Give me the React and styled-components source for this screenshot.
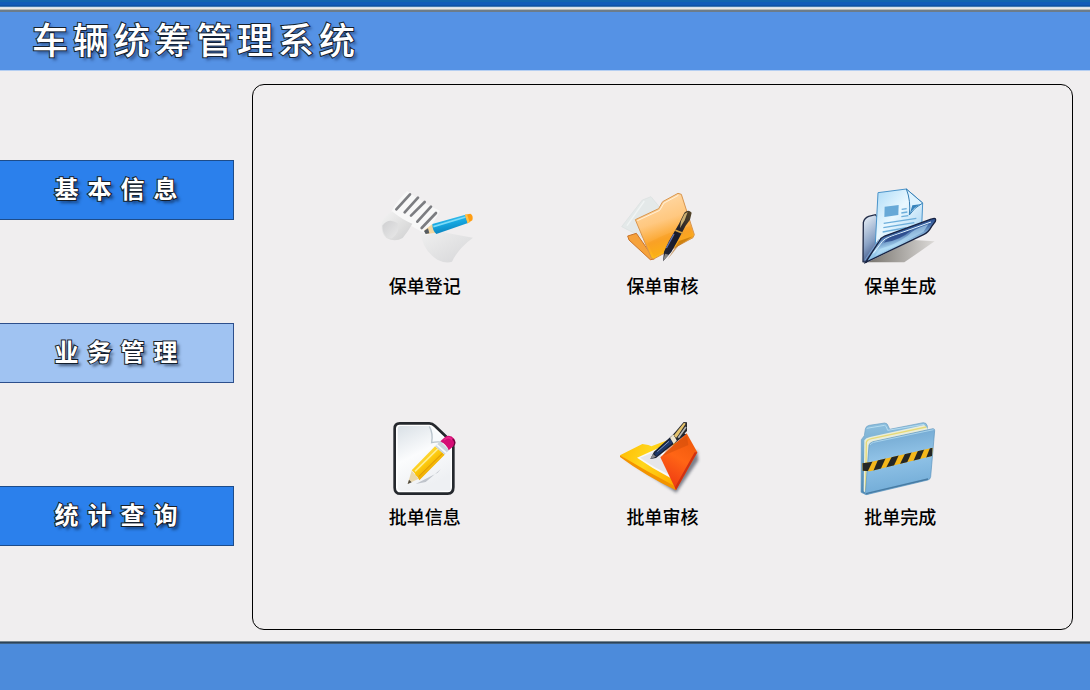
import React, { useState } from 'react';
import styled, { createGlobalStyle } from 'styled-components';


const GlobalStyle = createGlobalStyle`
  * {
    box-sizing: border-box;
  }

  body {
    margin: 0;
    background: #f0eeef;
    font-family: "Liberation Sans", "Noto Sans CJK SC", sans-serif;
  }

  button {
    font-family: inherit;
    cursor: pointer;
  }
`;

const Page = styled.div`
  display: flex;
  flex-direction: column;
  min-height: 100vh;
`;

const TopStrip = styled.div`
  height: 12px;
  background: linear-gradient(
    #1065ae 0 2px,
    #0f5cb8 2px 5px,
    #0c52a8 5px 6px,
    #3f78ae 6px 7px,
    #d5e2ee 7px 8px,
    #e9e9e4 8px 9px,
    #b5bab4 9px 10px,
    #6c7c8b 10px 12px
  );
`;

const Header = styled.header`
  display: flex;
  align-items: center;
  height: 59px;
  padding: 2px 32px 0;
  background: #5592e5;
  border-bottom: 1px solid #b4cef2;
`;

const Title = styled.h1`
  margin: 0;
  font-size: 36px;
  line-height: 40px;
  font-weight: 500;
  letter-spacing: 5px;
  color: #fff;
  -webkit-text-stroke: 2px #16202c;
  paint-order: stroke fill;
  text-shadow: 3px 3px 3px rgba(20, 40, 80, 0.5);
`;

const Body = styled.div`
  flex: 1;
  display: flex;
  gap: 18px;
  padding-right: 17px;
`;

const Sidebar = styled.nav`
  display: flex;
  flex-direction: column;
  justify-content: center;
  gap: 103px;
  width: 234px;
  padding-bottom: 6px;
`;

const NavButton = styled.button`
  height: 60px;
  padding: 0 0 0 8px;
  border: 1px solid ${(props) => (props.$active ? '#2d4f8c' : '#1d4c8a')};
  border-left: 0;
  background: ${(props) => (props.$active ? '#a0c3f2' : '#2b80ec')};
  font-size: 24px;
  line-height: 32px;
  font-weight: 700;
  letter-spacing: 9px;
  color: #fff;
  -webkit-text-stroke: 2px #1b2228;
  paint-order: stroke fill;
  text-shadow: 3px 3px 3px rgba(10, 25, 50, 0.6);
`;

const Panel = styled.main`
  flex: 1;
  display: grid;
  grid-template-columns: repeat(3, 1fr);
  grid-template-rows: repeat(2, 1fr);
  place-items: center;
  margin: 13px 0 11px;
  padding: 42px 53px 40px;
  border: 1px solid #000;
  border-radius: 12px;
`;

const Tile = styled.button`
  display: flex;
  flex-direction: column;
  align-items: center;
  gap: 8px;
  padding: 0;
  border: 0;
  background: none;
  font-size: 18px;
  line-height: 24px;
  font-weight: 500;
  color: #000;
`;

const Picture = styled.svg`
  display: block;
  width: 100px;
  height: 80px;
`;

const Footer = styled.footer`
  height: 49px;
  background: linear-gradient(
    #76868f 0 1px,
    #2c4258 1px 2px,
    #3f6080 2px 3px,
    #4c8bdb 3px
  );
`;


function RegisterIcon() {
  return (
    <Picture viewBox="27 21 300 240" aria-hidden="true">
      <defs>
        <linearGradient id="regPaper" x1="0" y1="0" x2="1" y2="1">
          <stop offset="0" stopColor="#f0f0f0" />
          <stop offset="1" stopColor="#d6d6d8" />
        </linearGradient>
        <linearGradient id="regRoll" x1="0" y1="0" x2="1" y2="1">
          <stop offset="0" stopColor="#f4f4f4" />
          <stop offset="0.6" stopColor="#dedede" />
          <stop offset="1" stopColor="#cdcdcf" />
        </linearGradient>
        <linearGradient id="regCurl" x1="0" y1="0" x2="1" y2="1">
          <stop offset="0" stopColor="#cfcfd1" />
          <stop offset="1" stopColor="#e9e9e9" />
        </linearGradient>
        <linearGradient id="regPencil" x1="0" y1="0" x2="0.3" y2="1">
          <stop offset="0" stopColor="#5fd0f4" />
          <stop offset="0.5" stopColor="#17a9e2" />
          <stop offset="1" stopColor="#0a82bd" />
        </linearGradient>
      </defs>
      <path d="M124 33 Q94 60 74 98 L140 140 L186 166 Q202 125 222 92 Q176 74 124 33Z" fill="#f8f8f8" />
      <path d="M163 152 Q168 210 214 239 Q240 252 258 245 Q277 205 321 173 Q262 163 213 152 Q183 178 163 152Z" fill="url(#regPaper)" />
      <path d="M78 94 Q54 106 46 133 Q45 160 61 174 Q87 188 110 174 Q126 155 139 131 Q113 122 78 94Z" fill="url(#regRoll)" />
      <path d="M49 137 Q68 111 95 130 Q105 155 78 175 Q50 174 49 137Z" fill="url(#regCurl)" />
      <g stroke="#7c7d81" strokeWidth="8" strokeLinecap="round">
        <path d="M132 43 L91 88" />
        <path d="M156 53 L116 97" />
        <path d="M176 66 L135 107" />
        <path d="M195 80 L154 125" />
        <path d="M210 99 L167 144" />
      </g>
      <path d="M175 151 L199 132 L211 158 L181 162Z" fill="#f3d6a0" />
      <path d="M174 153 L186 145 L190 160 L179 162Z" fill="#555b60" />
      <path d="M199 132 L298 104 L306 129 L211 162 Q199 152 199 132Z" fill="url(#regPencil)" />
      <path d="M202 140 L299 111" stroke="#7cdcf8" strokeWidth="5" />
      <path d="M297 104 L313 101 Q323 106 319 121 L305 130Z" fill="#ff9d13" />
      <path d="M297 104 L303 103 L311 127 L305 130Z" fill="#ffc24c" />
    </Picture>
  );
}

function ReviewIcon() {
  return (
    <Picture viewBox="21 21 300 240" aria-hidden="true">
      <defs>
        <linearGradient id="revFront" x1="0.2" y1="0" x2="0.5" y2="1">
          <stop offset="0" stopColor="#ffdcae" />
          <stop offset="0.45" stopColor="#ffc880" />
          <stop offset="0.72" stopColor="#fba52b" />
          <stop offset="1" stopColor="#ffc20d" />
        </linearGradient>
        <linearGradient id="revPen" x1="0" y1="1" x2="1" y2="0">
          <stop offset="0" stopColor="#232634" />
          <stop offset="0.5" stopColor="#171a2b" />
          <stop offset="1" stopColor="#574628" />
        </linearGradient>
      </defs>
      <path d="M50 140 L112 60 L138 50 L164 82 L120 176Z" fill="#e4e9e9" stroke="#d9e0e0" strokeWidth="2" />
      <path d="M66 137 L118 63" stroke="#f0f4f4" strokeWidth="4" />
      <path d="M68 168 L94 160 L148 237 L136 239 L72 180Z" fill="#f6a23b" stroke="#c9742b" strokeWidth="3" />
      <path d="M91 119 L161 86 L173 65 L219 40 L229 43 L268 164 L264 173 L146 237 L139 234Z" fill="url(#revFront)" stroke="#d8954e" strokeWidth="3" strokeLinejoin="round" />
      <path d="M97 122 L164 91 L177 69 L220 46" stroke="#fff0d8" strokeWidth="3" fill="none" />
      <path d="M128 190 Q180 160 257 138 L263 168 L147 231Z" fill="#f69718" opacity="0.3" />
      <path d="M188 238 L222 183 L264 169 L220 198Z" fill="#a95e08" opacity="0.55" />
      <path d="M174 244 L177 215 L192 183 L222 131 L238 98 Q250 87 260 98 L255 119 L242 137 L216 186 L199 216Z" fill="url(#revPen)" />
      <path d="M228 123 L239 101 L248 96 L239 121 L225 144Z" fill="#ccb071" />
      <path d="M211 151 L234 160" stroke="#d2a043" strokeWidth="5" />
      <path d="M184 204 L207 162" stroke="#6576b4" strokeWidth="4" />
      <path d="M180 221 L191 224 L174 244Z" fill="#888" />
    </Picture>
  );
}

function CreateIcon() {
  return (
    <Picture viewBox="15 21 300 240" aria-hidden="true">
      <defs>
        <linearGradient id="creSheet" x1="0" y1="0" x2="1" y2="1">
          <stop offset="0" stopColor="#abdaf7" />
          <stop offset="0.45" stopColor="#e9f8ff" />
          <stop offset="1" stopColor="#9ccdf0" />
        </linearGradient>
        <linearGradient id="creBack" x1="0" y1="0" x2="1" y2="1">
          <stop offset="0" stopColor="#f0f6fb" />
          <stop offset="0.35" stopColor="#8ba3c6" />
          <stop offset="0.6" stopColor="#33497c" />
          <stop offset="1" stopColor="#1f2f62" />
        </linearGradient>
        <linearGradient id="creFront" x1="0.3" y1="0.1" x2="0.65" y2="0.9">
          <stop offset="0" stopColor="#1c377c" />
          <stop offset="0.3" stopColor="#38609f" />
          <stop offset="0.6" stopColor="#a5d2ef" />
          <stop offset="1" stopColor="#5e9fd4" />
        </linearGradient>
        <linearGradient id="creShadow" x1="0" y1="0" x2="1" y2="0">
          <stop offset="0" stopColor="#77736d" />
          <stop offset="1" stopColor="#dcdad8" />
        </linearGradient>
      </defs>
      <path d="M68 247 L204 180 L269 184 L178 247Z" fill="url(#creShadow)" />
      <path d="M54 245 L55 127 Q58 114 71 109 L91 104 L98 112 L192 121 L208 130 L63 247Z" fill="url(#creBack)" stroke="#222c48" strokeWidth="4" />
      <path d="M99 38 L184 27 L233 69 L230 142 L91 191Z" fill="url(#creSheet)" stroke="#4b94ca" strokeWidth="3" />
      <path d="M184 27 Q198 62 193 105 Q207 83 233 69Z" fill="#def3ff" stroke="#347eb4" strokeWidth="3" />
      <path d="M193 105 Q207 78 231 72 L202 76Z" fill="#3684bd" />
      <path d="M119 80 L161 75 L160 105 L118 111Z" fill="#67a9d7" />
      <g stroke="#6caedb" strokeWidth="4">
        <path d="M170 88 L185 86 M169 99 L187 96 M169 110 L190 107" />
        <path d="M116 130 L214 115 M115 143 L208 128 M113 156 L184 143" />
      </g>
      <path d="M62 247 L103 183 Q107 173 119 168 L260 117 Q275 111 271 124 L260 139 Q250 157 237 163 L62 247Z" fill="url(#creFront)" stroke="#172241" strokeWidth="4" />
      <path d="M85 220 L112 184 Q120 175 133 171 L258 126" stroke="#e0f2ff" strokeWidth="3" fill="none" />
      <path d="M124 186 Q166 180 200 150 L150 166 Q128 172 116 188Z" fill="#1f3c80" opacity="0.7" />
      <path d="M106 206 Q151 194 188 167 Q205 148 250 133 L235 156 L90 228Z" fill="#bce4fa" opacity="0.55" />
      <path d="M60 240 L102 178" stroke="#789fcd" strokeWidth="3" />
    </Picture>
  );
}

function EditIcon() {
  return (
    <Picture viewBox="29 24 300 240" aria-hidden="true">
      <defs>
        <linearGradient id="ediPage" x1="0" y1="0" x2="0.4" y2="1">
          <stop offset="0" stopColor="#d9e0e6" />
          <stop offset="0.5" stopColor="#fbfcfd" />
          <stop offset="1" stopColor="#eef0f3" />
        </linearGradient>
        <linearGradient id="ediPencil" x1="0.2" y1="0.2" x2="0.7" y2="0.8">
          <stop offset="0" stopColor="#ffe35a" />
          <stop offset="0.5" stopColor="#fcc80b" />
          <stop offset="1" stopColor="#e99d00" />
        </linearGradient>
      </defs>
      <path d="M103 40 L192 40 Q201 40 209 48 L257 94 Q264 101 264 111 L264 232 Q264 251 247 251 L106 251 Q88 251 88 233 L88 56 Q88 40 103 40Z" fill="#fff" stroke="#25282d" strokeWidth="8" />
      <path d="M105 48 L190 48 L248 102 L256 116 L256 242 L106 242 Q97 242 97 232 L97 57 Q97 48 105 48Z" fill="url(#ediPage)" />
      <path d="M191 45 Q204 70 199 98 Q225 93 257 103Z" fill="#f7fafc" />
      <path d="M192 49 Q204 70 199 98 Q221 92 250 101" fill="none" stroke="#b8c4cc" strokeWidth="4" />
      <path d="M151 222 L217 188 L226 178 L181 216Z" fill="#bfc4cb" />
      <path d="M127 222 L139 182 L160 206Z" fill="#e9d7ac" />
      <path d="M127 222 L131 209 L139 217Z" fill="#4f4a40" />
      <path d="M139 181 L209 109 L238 134 L162 211Q158 200 151 196Q147 187 139 181Z" fill="url(#ediPencil)" />
      <path d="M149 184 L217 117" stroke="#ffee91" strokeWidth="5" />
      <path d="M160 200 L232 129" stroke="#d99204" strokeWidth="3" />
      <path d="M209 109 L225 94 L251 120 L238 134Z" fill="#cbd6de" />
      <path d="M214 104 L243 129" stroke="#f5f9fb" strokeWidth="5" />
      <path d="M225 94 L242 79 Q256 73 267 87 Q274 99 265 108 L250 121 Q244 104 225 94Z" fill="#d50c75" />
      <path d="M236 90 Q250 76 261 90" stroke="#e8288a" strokeWidth="5" fill="none" />
      <path d="M262 87 Q273 96 265 108" stroke="#6e063e" strokeWidth="4" fill="none" />
    </Picture>
  );
}

function AuditIcon() {
  return (
    <Picture viewBox="19 24 300 240" aria-hidden="true">
      <defs>
        <linearGradient id="audYellow" x1="0" y1="0" x2="1" y2="0.4">
          <stop offset="0" stopColor="#ffb900" />
          <stop offset="0.5" stopColor="#ffd61c" />
          <stop offset="1" stopColor="#ffb000" />
        </linearGradient>
        <linearGradient id="audRed" x1="0.7" y1="0" x2="0.3" y2="1">
          <stop offset="0" stopColor="#ef590c" />
          <stop offset="0.45" stopColor="#ff6515" />
          <stop offset="1" stopColor="#ed3612" />
        </linearGradient>
        <filter id="audBlur" x="-10%" y="-10%" width="120%" height="120%">
          <feGaussianBlur stdDeviation="4" />
        </filter>
      </defs>
      <path d="M56 144 L212 248 L278 151 L274 121 L204 174Z" fill="#565a68" opacity="0.75" filter="url(#audBlur)" />
      <path d="M43 136 L110 102 L128 105 L137 109 L203 84 L230 125 L211 239 Q125 195 43 136Z" fill="url(#audYellow)" />
      <path d="M43 136 Q125 186 211 230 L211 241 Q119 197 43 141Z" fill="#f39300" />
      <path d="M94 143 L185 102 L226 112 L196 205 Q141 176 94 143Z" fill="#f8f8f8" />
      <path d="M103 143 L161 119 L188 193 Q145 172 103 143Z" fill="#e6e6ea" />
      <path d="M243 70 L275 127 L211 240 L164 142Z" fill="url(#audRed)" />
      <path d="M171 138 L248 105 L244 78 L190 108Z" fill="#c94909" opacity="0.45" />
      <path d="M275 127 L211 240 L208 232 L267 127Z" fill="#cf3112" />
      <path d="M134 147 L145 125 L218 59 L241 73 L151 144Z" fill="#1a2132" />
      <path d="M146 130 L194 87 L201 98 L152 139Z" fill="#1d3768" />
      <path d="M193 83 L203 73 L214 91 L204 102Z" fill="#eee6d0" />
      <path d="M203 73 L234 36 L244 37 L244 63 L214 92Z" fill="#292a2d" />
      <path d="M205 76 L235 38 L240 41 L218 75 L211 84Z" fill="#e6c46f" />
      <path d="M218 83 L241 51" stroke="#b7b8b7" strokeWidth="5" />
      <path d="M134 147 L142 132 L151 140Z" fill="#8b8c91" />
      <path d="M155 125 L190 94" stroke="#8398bd" strokeWidth="3" />
    </Picture>
  );
}

function DoneIcon() {
  return (
    <Picture viewBox="15 24 300 240" aria-hidden="true">
      <defs>
        <linearGradient id="donBack" x1="0" y1="0" x2="0" y2="1">
          <stop offset="0" stopColor="#8ec0df" />
          <stop offset="1" stopColor="#4c86b2" />
        </linearGradient>
        <linearGradient id="donFront" x1="0" y1="0" x2="0.15" y2="1">
          <stop offset="0" stopColor="#6ba2cc" />
          <stop offset="0.5" stopColor="#91c3e7" />
          <stop offset="1" stopColor="#72acd7" />
        </linearGradient>
        <clipPath id="donTape">
          <path d="M52 160 L74 157 L263 113 L261 138 L75 184 L53 182Z" />
        </clipPath>
      </defs>
      <path d="M48 247 L49 89 L58 77 L61 57 Q63 48 73 46 L119 39 Q127 39 130 49 L134 58 L235 38 Q245 38 247 48 L247 190 L63 254Z" fill="url(#donBack)" stroke="#6a9fc2" strokeWidth="2" />
      <path d="M65 55 L119 46 Q124 46 128 61 L238 43" fill="none" stroke="#b6dcf0" strokeWidth="3" />
      <path d="M56 244 L58 91 Q62 84 75 81 L238 45 L248 56 L248 183 L66 253Z" fill="#e9edda" />
      <path d="M62 240 L64 97 Q66 89 80 86 L244 51" fill="none" stroke="#e7da77" strokeWidth="4" />
      <path d="M61 251 L72 105 Q74 98 84 95 L264 56 Q269 56 269 62 L257 200 Q256 208 249 210 L64 254Z" fill="url(#donFront)" stroke="#5a93bd" strokeWidth="2" />
      <path d="M75 105 Q77 99 86 97 L266 59" fill="none" stroke="#a9d4ed" strokeWidth="3" />
      <path d="M52 160 L74 157 L263 113 L261 138 L75 184 L53 182Z" fill="#f5b71a" />
      <g clipPath="url(#donTape)" fill="#252725">
        <path d="M50 155 L83 154 L66 189 L50 190Z" />
        <path d="M101 145 L124 140 L104 184 L82 190Z" />
        <path d="M143 135 L164 130 L144 173 L121 178Z" />
        <path d="M183 125 L203 120 L184 163 L162 168Z" />
        <path d="M222 115 L241 110 L223 153 L203 158Z" />
        <path d="M258 106 L273 102 L265 140 L241 149Z" />
      </g>
      <path d="M63 251 L249 207" stroke="#477ba3" strokeWidth="4" />
    </Picture>
  );
}


const sections = ['基本信息', '业务管理', '统计查询'];

const actions = [
  { label: '保单登记', Icon: RegisterIcon },
  { label: '保单审核', Icon: ReviewIcon },
  { label: '保单生成', Icon: CreateIcon },
  { label: '批单信息', Icon: EditIcon },
  { label: '批单审核', Icon: AuditIcon },
  { label: '批单完成', Icon: DoneIcon },
];

function App() {
  const [active, setActive] = useState('业务管理');

  return (
    <Page lang="zh-CN">
      <GlobalStyle />
      <TopStrip />
      <Header>
        <Title>车辆统筹管理系统</Title>
      </Header>
      <Body>
        <Sidebar>
          {sections.map((name) => (
            <NavButton
              key={name}
              type="button"
              $active={name === active}
              aria-current={name === active ? 'page' : undefined}
              onClick={() => setActive(name)}
            >
              {name}
            </NavButton>
          ))}
        </Sidebar>
        <Panel>
          {actions.map(({ label, Icon }) => (
            <Tile key={label} type="button">
              <Icon />
              {label}
            </Tile>
          ))}
        </Panel>
      </Body>
      <Footer />
    </Page>
  );
}

export default App;
